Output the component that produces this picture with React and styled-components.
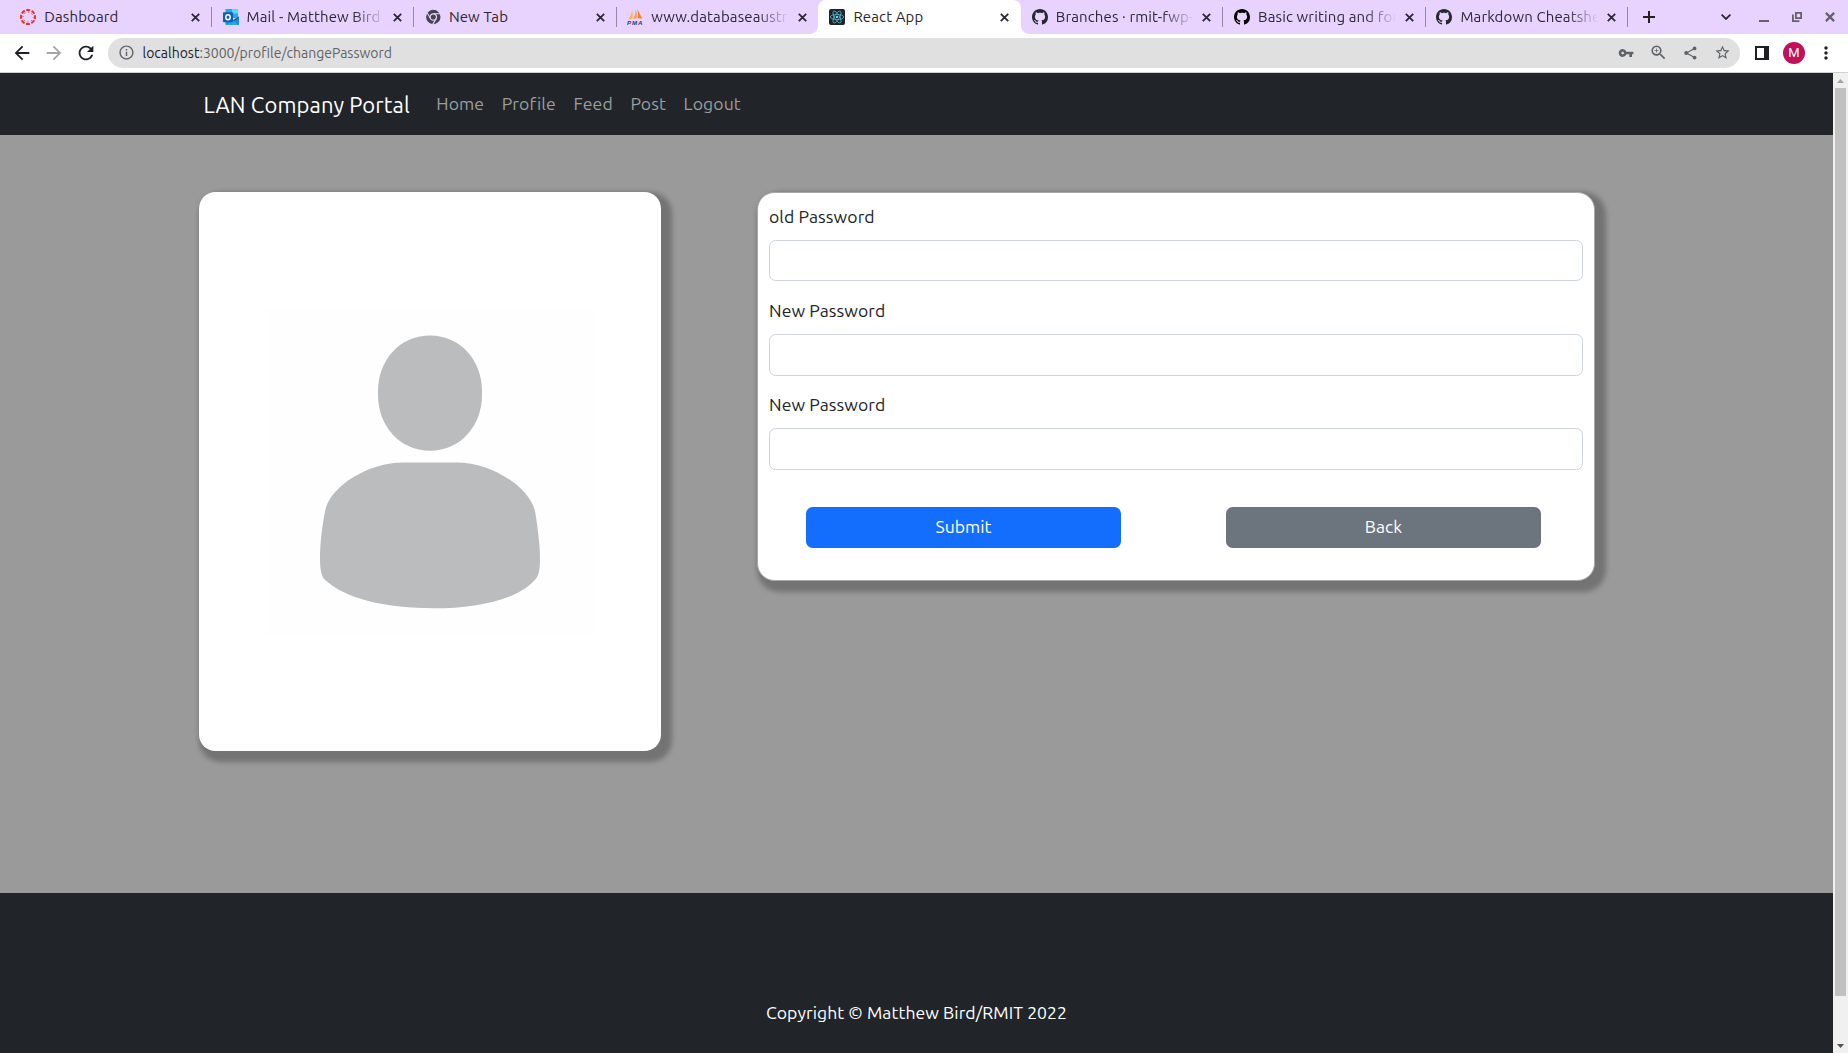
import React from "react";
import styled, { createGlobalStyle, css } from "styled-components";
import {
  MdArrowBack,
  MdArrowForward,
  MdRefresh,
  MdVpnKey,
  MdZoomIn,
  MdStarBorder,
  MdMoreVert,
  MdInfoOutline,
} from "react-icons/md";

const GlobalStyle = createGlobalStyle`
  *, *::before, *::after { box-sizing: border-box; }
  html, body { margin: 0; overflow: hidden; }
  body {
    font-family: Ubuntu, "Noto Sans", "Open Sans", sans-serif;
    color: #212529;
  }
  svg { display: block; flex: none; }
`;

const Window = styled.div`
  display: flex;
  flex-direction: column;
  width: 1848px;
  height: 1053px;
  overflow: hidden;
`;

/* ---------- tab strip ---------- */

const TabStrip = styled.div`
  display: flex;
  height: 34px;
  padding-left: 11px;
  background: #e8d3ff;
  flex: none;
`;

const activeTab = css`
  width: 203px;
  margin: 0 1.5px 0 -2.2px;
  padding-left: 11.4px;
  border-radius: 8px 8px 0 0;
  background: #fff;
  &::before,
  &::after {
    content: "";
    position: absolute;
    bottom: 0;
    width: 8px;
    height: 8px;
  }
  &::before {
    left: -8px;
    background: radial-gradient(circle at 0 0, transparent 7.5px, #fff 8.2px);
  }
  &::after {
    right: -8px;
    background: radial-gradient(circle at 100% 0, transparent 7.5px, #fff 8.2px);
  }
`;

const TabBox = styled.div`
  position: relative;
  display: flex;
  align-items: center;
  flex: none;
  width: 202.3px;
  padding-left: 9.3px;
  ${(p) => p.$active && activeTab}
`;

const TabTitle = styled.div`
  width: 138px;
  margin-left: 8px;
  overflow: hidden;
  white-space: nowrap;
  font-size: 15px;
  line-height: 20px;
  letter-spacing: 0.12px;
  color: #2b2733;
  ${(p) =>
    p.$fade &&
    css`
      mask-image: linear-gradient(to right, #000 107px, transparent 138px);
    `}
`;

const TabClose = styled.div`
  display: flex;
  justify-content: center;
  width: 18px;
  margin-left: 4.2px;
`;

const TabDivider = styled.div`
  width: 1px;
  height: 20px;
  margin-left: 6.5px;
  background: #958aa5;
`;

const NewTab = styled.div`
  display: flex;
  align-items: center;
  width: 74px;
  padding-left: 14px;
`;

const WindowControls = styled.div`
  display: flex;
  align-items: center;
  margin-left: auto;
  color: #65606b;
`;

const Control = styled.div`
  display: flex;
  justify-content: center;
  width: ${(p) => p.$width}px;
`;

/* ---------- toolbar ---------- */

const Toolbar = styled.div`
  display: flex;
  align-items: center;
  height: 39px;
  padding: 0 12px 1px 11px;
  background: #fff;
  border-bottom: 1px solid #d0d0d0;
  flex: none;
  color: #202124;
`;

const NavButton = styled.div`
  width: 32px;
  flex: none;
  color: ${(p) => (p.$disabled ? "#a5a5a5" : "#202124")};
`;

const Omnibox = styled.div`
  display: flex;
  align-items: center;
  width: 1632px;
  height: 30px;
  margin-left: 1px;
  padding: 0 2px 0 9.5px;
  border-radius: 15px;
  background: #e0e0e0;
  color: #5f6368;
  flex: none;
`;

const Url = styled.div`
  flex: 1;
  margin-left: 8px;
  font-size: 14px;
  line-height: 20px;
  color: #636363;
  b {
    font-weight: 400;
    color: #202124;
  }
`;

const OmniActions = styled.div`
  display: flex;
`;

const ActionSlot = styled.div`
  display: flex;
  align-items: center;
  justify-content: center;
  width: 32px;
  height: 24px;
`;

const ToolbarEnd = styled.div`
  display: flex;
  align-items: center;
  margin-left: 6px;
`;

const Avatar = styled.div`
  width: 22px;
  height: 22px;
  border-radius: 50%;
  background: #c2105b;
  color: #fff;
  font: 400 13px/22px Roboto, sans-serif;
  text-align: center;
`;

/* ---------- page ---------- */

const Viewport = styled.div`
  display: flex;
  flex: 1;
  min-height: 0;
`;

const Page = styled.div`
  display: flex;
  flex-direction: column;
  width: 1833px;
  font-size: 17.6px;
  line-height: 26.4px;
`;

const Navbar = styled.nav`
  display: flex;
  align-items: center;
  height: 62px;
  padding-left: 203.5px;
  background: #212529;
  flex: none;
`;

const Brand = styled.div`
  width: 224px;
  color: #fff;
  font-size: 22px;
  line-height: 33px;
  letter-spacing: 0.12px;
  white-space: nowrap;
`;

const NavLink = styled.a`
  padding: 0 8.8px;
  color: #9b9d9e;
  letter-spacing: 0.1px;
`;

const Main = styled.main`
  display: flex;
  align-items: flex-start;
  height: 758px;
  padding: 57px 0 0 199px;
  background: #9a9a9a;
  flex: none;
`;

const cardShadow = css`
  box-shadow: 5.5px 5.5px 5.5px 5px rgba(0, 0, 0, 0.25);
`;

const ProfileCard = styled.section`
  width: 462px;
  height: 559px;
  border-radius: 16.5px;
  background: #fff;
  overflow: hidden;
  ${cardShadow}
`;

const FormCard = styled.form`
  width: 838px;
  height: 389px;
  margin-left: 96px;
  padding: 10.7px 11px;
  border: 1px solid #a8a8a8;
  border-radius: 17.6px;
  background: #fff;
  ${cardShadow}
`;

const Field = styled.label`
  display: block;
  margin-bottom: 16.6px;
  letter-spacing: 0.08px;
`;

const Input = styled.input`
  display: block;
  width: 100%;
  height: 41.8px;
  margin-top: 9.6px;
  border: 1px solid #ced4da;
  border-radius: 6.6px;
  background: #fff;
`;

const Actions = styled.div`
  display: grid;
  grid-template-columns: 315px 315px;
  gap: 105px;
  padding: 20.5px 0 0 37px;
`;

const Button = styled.button`
  height: 41px;
  padding: 0 0 2px;
  border: 0;
  border-radius: 6.6px;
  background: ${(p) => (p.$primary ? "#146efd" : "#6c757d")};
  color: #fff;
  font: inherit;
`;

const Footer = styled.footer`
  display: flex;
  justify-content: center;
  align-items: flex-end;
  flex: 1;
  padding-bottom: 27px;
  background: #212529;
  color: #fff;
  letter-spacing: 0.06px;
`;

const Scrollbar = styled.div`
  display: flex;
  flex-direction: column;
  align-items: center;
  width: 15px;
  background: #f0f0f0;
`;

const Thumb = styled.div`
  width: 11px;
  height: 908px;
  background: #c1c1c1;
`;

const ScrollArrow = styled.div`
  display: flex;
  align-items: center;
  justify-content: center;
  height: 15px;
  margin-top: ${(p) => p.$top || 0};
`;

/* ---------- drawings ---------- */

const Cross = ({ size = 9, stroke = "#2b2733", weight = 1.8 }) => (
  <svg width={size} height={size} viewBox="0 0 9 9" stroke={stroke} strokeWidth={weight}>
    <path d="M.8.8l7.4 7.4M8.2.8L.8 8.2" />
  </svg>
);

const CanvasIcon = () => (
  <svg width="16" height="16" viewBox="0 0 16 16" fill="none">
    <circle cx="8" cy="8" r="7" stroke="#e2352f" strokeWidth="2.1" strokeDasharray="4 1.498" strokeDashoffset="2" />
    <circle cx="8" cy="8" r="4.9" stroke="#e2352f" strokeWidth="1" strokeDasharray="1.2 2.648" strokeDashoffset=".6" />
  </svg>
);

const OutlookIcon = () => (
  <svg width="16" height="16" viewBox="0 0 16 16">
    <path fill="#28a8ea" d="M2.500 0H15v9H2.500z" />
    <path fill="#50d9ff" d="M9 0h6v4.500H9z" />
    <path fill="#0364b8" d="M4 4h5.500v5H4z" />
    <path fill="#1490df" d="M2.500 9L9.500 11.500L16 7.500V16H3.500a1 1 0 0 1-1-1z" />
    <path fill="#0a63b5" d="M9.500 11.500L16 7.500V9L11 12z" />
    <path fill="#28a8ea" d="M3 16l7-4.500 6 4.500z" />
    <rect y="3.300" width="10" height="10" rx=".8" fill="#0f5fb3" />
    <ellipse cx="5" cy="8.300" rx="2.200" ry="2.500" fill="none" stroke="#fff" strokeWidth="1.400" />
  </svg>
);

const ChromeIcon = () => (
  <svg width="16" height="16" viewBox="0 0 16 16">
    <circle cx="8.300" cy="8" r="7.200" fill="#46434d" />
    <circle cx="8.300" cy="8" r="3.200" fill="none" stroke="#e8d3ff" strokeWidth="1.200" />
    <path d="M8.300 4.800h7M5.500 9.600L2.100 3.700M11.100 9.600l-3.500 6" stroke="#e8d3ff" strokeWidth="1.100" />
  </svg>
);

const PmaIcon = () => (
  <svg width="16" height="16" viewBox="0 0 16 16">
    <path d="M5 1.500C4.800 5 3 8.500.8 10.500l4.700-.8C6 6.500 5.800 4 5 1.500z" fill="#fbb25c" />
    <path d="M8.700.5C8.600 4 8 7 6.300 9.800l3.300-.5C10 6 9.600 3 8.700.5z" fill="#f99b2e" />
    <path d="M10.300 0c.8 3 .8 6 .2 9.300l5 .3C13.600 7 12.300 3 10.300 0z" fill="#f7811a" />
    <text x="0" y="15.500" fontFamily="Liberation Sans, sans-serif" fontSize="6.200" fontWeight="700" fontStyle="italic" textLength="15.500" fill="#35366b">PMA</text>
  </svg>
);

const ReactIcon = () => (
  <svg width="16" height="16" viewBox="0 0 16 16">
    <rect width="16" height="16" rx="2" fill="#20232a" />
    <g fill="none" stroke="#52b6cf" strokeWidth=".8">
      <ellipse cx="8" cy="8" rx="6.700" ry="2.600" />
      <ellipse cx="8" cy="8" rx="6.700" ry="2.600" transform="rotate(60 8 8)" />
      <ellipse cx="8" cy="8" rx="6.700" ry="2.600" transform="rotate(120 8 8)" />
    </g>
    <circle cx="8" cy="8" r="1.300" fill="#61dafb" />
  </svg>
);

const GithubIcon = ({ fill = "#24292f" }) => (
  <svg width="16" height="16" viewBox="0 0 16 16" fill={fill}>
    <path d="M8 0C3.58 0 0 3.58 0 8c0 3.54 2.29 6.53 5.47 7.59.4.07.55-.17.55-.38 0-.19-.01-.82-.01-1.49-2.01.37-2.53-.49-2.69-.94-.09-.23-.48-.94-.82-1.13-.28-.15-.68-.52-.01-.53.63-.01 1.08.58 1.23.82.72 1.21 1.87.87 2.33.66.07-.52.28-.87.51-1.07-1.78-.2-3.64-.89-3.64-3.95 0-.87.31-1.59.82-2.15-.08-.2-.36-1.02.08-2.12 0 0 .67-.21 2.2.82.64-.18 1.32-.27 2-.27s1.36.09 2 .27c1.53-1.04 2.2-.82 2.2-.82.44 1.1.16 1.92.08 2.12.51.56.82 1.27.82 2.15 0 3.07-1.87 3.75-3.65 3.95.29.25.54.73.54 1.48 0 1.07-.01 1.93-.01 2.2 0 .21.15.46.55.38A8.01 8.01 0 0016 8c0-4.42-3.58-8-8-8z" />
  </svg>
);

const PersonPlaceholder = () => (
  <svg width="462" height="559" viewBox="57 57 1386 1461" preserveAspectRatio="none">
    <rect x="257" y="360" width="987" height="856" fill="#fefefe" />
    <g fill="#bbbcbe">
      <path d="M750 432C842 432 906 498 906 577V588C906 667 842 733 750 733S594 667 594 588V577C594 498 658 432 750 432z" />
      <path d="M670 764H832C930 764 1050 826 1066 895C1075 945 1080 985 1080 1017C1080 1045 1076 1056 1070 1065C1020 1122 890 1145 762 1145C620 1145 495 1122 432 1068C424 1058 420 1045 420 1012C420 975 426 930 437 884C455 825 565 764 670 764z" />
    </g>
  </svg>
);

const tabs = [
  { title: "Dashboard", icon: <CanvasIcon /> },
  { title: "Mail - Matthew Bird -", icon: <OutlookIcon />, fade: true },
  { title: "New Tab", icon: <ChromeIcon /> },
  { title: "www.databaseaustra", icon: <PmaIcon />, fade: true },
  { title: "React App", icon: <ReactIcon />, active: true },
  { title: "Branches · rmit-fwp-", icon: <GithubIcon />, fade: true },
  { title: "Basic writing and for", icon: <GithubIcon fill="#000" />, fade: true },
  { title: "Markdown Cheatshee", icon: <GithubIcon />, fade: true },
];

const links = ["Home", "Profile", "Feed", "Post", "Logout"];

const fields = ["old Password", "New Password", "New Password"];

export default function App() {
  return (
    <Window>
      <GlobalStyle />
      <TabStrip>
        {tabs.map((tab, i) => (
          <TabBox key={tab.title} $active={tab.active}>
            {tab.icon}
            <TabTitle $fade={tab.fade}>{tab.title}</TabTitle>
            <TabClose><Cross /></TabClose>
            {!tab.active && i !== 3 && <TabDivider />}
          </TabBox>
        ))}
        <NewTab>
          <svg width="12" height="12" viewBox="0 0 12 12" stroke="#202124" strokeWidth="2">
            <path d="M6 0v12M0 6h12" />
          </svg>
        </NewTab>
        <WindowControls>
          <Control $width={40}>
            <svg width="10" height="6" viewBox="0 0 10 6" fill="none" stroke="#2b2733" strokeWidth="1.8">
              <path d="M.6.6L5 5 9.400.6" />
            </svg>
          </Control>
          <Control $width={36}>
            <svg width="10" height="10" viewBox="0 0 10 10"><path d="M0 8h10v2H0z" fill="currentColor" /></svg>
          </Control>
          <Control $width={30}>
            <svg width="10" height="10" viewBox="0 0 10 10" fill="none" stroke="currentColor" strokeWidth="1.800">
              <path d="M3.900.9h5.200v5.200H3.900zM.9 2.600v6.500h6.500" />
            </svg>
          </Control>
          <Control $width={36}><Cross size={10} stroke="#65606b" weight={2} /></Control>
        </WindowControls>
      </TabStrip>

      <Toolbar>
        <NavButton><MdArrowBack size={22} /></NavButton>
        <NavButton $disabled><MdArrowForward size={22} /></NavButton>
        <NavButton><MdRefresh size={22} /></NavButton>
        <Omnibox>
          <MdInfoOutline size={17} />
          <Url><b>localhost</b>:3000/profile/changePassword</Url>
          <OmniActions>
            <ActionSlot><MdVpnKey size={16} /></ActionSlot>
            <ActionSlot><MdZoomIn size={19} /></ActionSlot>
            <ActionSlot>
              <svg width="13" height="14" viewBox="0 0 13 14">
                <path d="M10.500 2.500L2.500 7l8 4.500" fill="none" stroke="currentColor" strokeWidth="1.200" />
                <g fill="currentColor">
                  <circle cx="10.600" cy="2.400" r="1.900" />
                  <circle cx="2.200" cy="7" r="2" />
                  <circle cx="10.600" cy="11.600" r="1.900" />
                </g>
              </svg>
            </ActionSlot>
            <ActionSlot><MdStarBorder size={17} /></ActionSlot>
          </OmniActions>
        </Omnibox>
        <ToolbarEnd>
          <ActionSlot>
            <svg width="14" height="14" viewBox="0 0 14 14">
              <path fill="#202124" fillRule="evenodd" d="M0 0h14v14H0zM2 2v10h7V2z" />
            </svg>
          </ActionSlot>
          <ActionSlot><Avatar>M</Avatar></ActionSlot>
          <ActionSlot><MdMoreVert size={20} /></ActionSlot>
        </ToolbarEnd>
      </Toolbar>

      <Viewport>
        <Page>
          <Navbar>
            <Brand>LAN Company Portal</Brand>
            {links.map((name) => (
              <NavLink key={name}>{name}</NavLink>
            ))}
          </Navbar>
          <Main>
            <ProfileCard><PersonPlaceholder /></ProfileCard>
            <FormCard>
              {fields.map((name, i) => (
                <Field key={i}>
                  {name}
                  <Input type="password" />
                </Field>
              ))}
              <Actions>
                <Button type="button" $primary>Submit</Button>
                <Button type="button">Back</Button>
              </Actions>
            </FormCard>
          </Main>
          <Footer>Copyright © Matthew Bird/RMIT 2022</Footer>
        </Page>
        <Scrollbar>
          <ScrollArrow>
            <svg width="7" height="4" viewBox="0 0 7 4"><path d="M0 4L3.500 0 7 4z" fill="#a3a3a3" /></svg>
          </ScrollArrow>
          <Thumb />
          <ScrollArrow $top="auto">
            <svg width="7" height="4" viewBox="0 0 7 4"><path d="M0 0h7L3.500 4z" fill="#505050" /></svg>
          </ScrollArrow>
        </Scrollbar>
      </Viewport>
    </Window>
  );
}
